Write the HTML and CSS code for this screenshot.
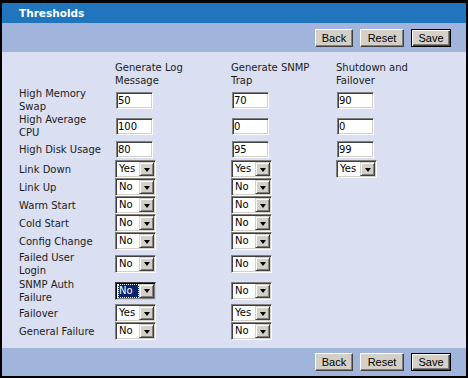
FILE: index.html
```html
<!DOCTYPE html>
<html>
<head>
<meta charset="utf-8">
<title>Thresholds</title>
<link rel="stylesheet" href="styles.css">
</head>
<body>
<div class="frame">
  <div class="titlebar">Thresholds</div>
  <div class="toolbar">
    <button class="btn-back">Back</button>
    <button class="btn-reset">Reset</button>
    <button class="btn-save">Save</button>
  </div>
  <div class="content">
    <div class="grid">
      <div></div>
      <div class="hd">Generate Log Message</div>
      <div class="hd">Generate SNMP Trap</div>
      <div class="hd">Shutdown and Failover</div>

      <div class="lbl">High Memory Swap</div>
      <div><input class="txt" value="50"></div>
      <div><input class="txt" value="70"></div>
      <div><input class="txt" value="90"></div>

      <div class="lbl">High Average CPU</div>
      <div><input class="txt" value="100"></div>
      <div><input class="txt" value="0"></div>
      <div><input class="txt" value="0"></div>

      <div class="lbl">High Disk Usage</div>
      <div><input class="txt" value="80"></div>
      <div><input class="txt" value="95"></div>
      <div><input class="txt" value="99"></div>

      <div class="lbl">Link Down</div>
      <div><span class="sel"><select><option selected>Yes</option><option>No</option></select><span class="arrow"></span></span></div>
      <div><span class="sel"><select><option selected>Yes</option><option>No</option></select><span class="arrow"></span></span></div>
      <div><span class="sel"><select><option selected>Yes</option><option>No</option></select><span class="arrow"></span></span></div>

      <div class="lbl">Link Up</div>
      <div><span class="sel"><select><option>Yes</option><option selected>No</option></select><span class="arrow"></span></span></div>
      <div><span class="sel"><select><option>Yes</option><option selected>No</option></select><span class="arrow"></span></span></div>
      <div></div>

      <div class="lbl">Warm Start</div>
      <div><span class="sel"><select><option>Yes</option><option selected>No</option></select><span class="arrow"></span></span></div>
      <div><span class="sel"><select><option>Yes</option><option selected>No</option></select><span class="arrow"></span></span></div>
      <div></div>

      <div class="lbl">Cold Start</div>
      <div><span class="sel"><select><option>Yes</option><option selected>No</option></select><span class="arrow"></span></span></div>
      <div><span class="sel"><select><option>Yes</option><option selected>No</option></select><span class="arrow"></span></span></div>
      <div></div>

      <div class="lbl">Config Change</div>
      <div><span class="sel"><select><option>Yes</option><option selected>No</option></select><span class="arrow"></span></span></div>
      <div><span class="sel"><select><option>Yes</option><option selected>No</option></select><span class="arrow"></span></span></div>
      <div></div>

      <div class="lbl tall">Failed User Login</div>
      <div><span class="sel"><select><option>Yes</option><option selected>No</option></select><span class="arrow"></span></span></div>
      <div><span class="sel"><select><option>Yes</option><option selected>No</option></select><span class="arrow"></span></span></div>
      <div></div>

      <div class="lbl tall">SNMP Auth Failure</div>
      <div><span class="sel focus"><select><option>Yes</option><option selected>No</option></select><span class="arrow"></span></span></div>
      <div><span class="sel"><select><option>Yes</option><option selected>No</option></select><span class="arrow"></span></span></div>
      <div></div>

      <div class="lbl">Failover</div>
      <div><span class="sel"><select><option selected>Yes</option><option>No</option></select><span class="arrow"></span></span></div>
      <div><span class="sel"><select><option selected>Yes</option><option>No</option></select><span class="arrow"></span></span></div>
      <div></div>

      <div class="lbl">General Failure</div>
      <div><span class="sel"><select><option>Yes</option><option selected>No</option></select><span class="arrow"></span></span></div>
      <div><span class="sel"><select><option>Yes</option><option selected>No</option></select><span class="arrow"></span></span></div>
      <div></div>
    </div>
  </div>
  <div class="toolbar bottom">
    <button class="btn-back">Back</button>
    <button class="btn-reset">Reset</button>
    <button class="btn-save">Save</button>
  </div>
</div>
</body>
</html>
```

FILE: styles.css
```css
* { box-sizing: border-box; }

html, body {
  margin: 0;
  padding: 0;
  background: #000;
}

.frame {
  width: 468px;
  height: 378px;
  border: 2px solid #000;
  border-top-width: 3px;
  display: flex;
  flex-direction: column;
  font-family: "DejaVu Sans", Verdana, sans-serif;
  font-size: 10px;
  color: #1c1c1c;
}

.titlebar {
  height: 20px;
  flex: 0 0 20px;
  background: #2075bc;
  color: #fff;
  font-weight: bold;
  font-size: 10.5px;
  line-height: 20px;
  padding-left: 17px;
}

.toolbar {
  height: 29px;
  flex: 0 0 29px;
  background: #a1b4dc;
  display: flex;
  align-items: center;
  justify-content: flex-end;
  gap: 7px;
  padding-right: 15px;
  padding-top: 1px;
}

.toolbar.bottom {
  height: 28px;
  flex: 0 0 28px;
  padding-top: 0;
  padding-bottom: 1px;
}

.toolbar button {
  font-family: "Liberation Sans", Arial, sans-serif;
  font-size: 11px;
  color: #000;
  height: 18px;
  padding: 0;
  margin: 0;
  background: #d4d0c8;
  border: 1px solid;
  border-color: #fff #404040 #404040 #fff;
  box-shadow: inset -1px -1px 0 #808080;
  line-height: 14px;
}

.btn-back { width: 38px; }
.btn-reset { width: 44px; }
.toolbar .btn-save {
  width: 40px;
  border-color: #000;
  box-shadow: inset 1px 1px 0 #fff, inset -1px -1px 0 #404040, inset -2px -2px 0 #808080;
}

.content {
  flex: 1;
  background: #dadff1;
  padding: 9px 0 0 17px;
}

.grid {
  display: grid;
  grid-template-columns: 96px 116px 105px 1fr;
  align-items: center;
  line-height: 13px;
}

.hd {
  max-width: 100px;
  align-self: start;
}

.lbl {
  padding-right: 14px;
}

.lbl.tall {
  padding: 0.5px 14px 0.5px 0;
}

.txt {
  display: block;
  width: 37px;
  height: 17px;
  margin: 2px 0 2px 1px;
  padding: 0 1px;
  font-family: "DejaVu Sans", Verdana, sans-serif;
  font-size: 10px;
  color: #000;
  background: #fff;
  border: 1px solid;
  border-color: #808080 #fff #fff #808080;
  box-shadow: inset 1px 1px 0 #404040, inset -1px -1px 0 #d4d0c8;
  outline: none;
}

.sel {
  display: flex;
  width: 41px;
  height: 18px;
  background: #fff;
  border: 1px solid;
  border-color: #808080 #fff #fff #808080;
  padding: 1px;
  box-shadow: inset 1px 1px 0 #404040, inset -1px -1px 0 #d4d0c8;
}

.sel select {
  appearance: none;
  -webkit-appearance: none;
  flex: 1;
  min-width: 0;
  height: 14px;
  margin: 0 0 0 1px;
  padding: 0 0 0 1px;
  border: 0;
  background: #fff;
  color: #000;
  font-family: "DejaVu Sans", Verdana, sans-serif;
  font-size: 10px;
  line-height: 14px;
  outline: none;
}

.sel .arrow {
  flex: 0 0 15px;
  height: 14px;
  background: #d4d0c8;
  border: 1px solid;
  border-color: #d4d0c8 #404040 #404040 #d4d0c8;
  box-shadow: inset 1px 1px 0 #fff, inset -1px -1px 0 #808080;
  display: flex;
  align-items: center;
  justify-content: center;
}

.sel .arrow::after {
  content: "";
  width: 0;
  height: 0;
  border-left: 3.5px solid transparent;
  border-right: 3.5px solid transparent;
  border-top: 4px solid #000;
  margin-top: 1px;
}

.sel.focus {
  border-color: #404040 #d4d0c8 #d4d0c8 #404040;
  box-shadow: inset 1px 1px 0 #000, inset -1px -1px 0 #808080;
}

.sel.focus select {
  background: #0a246a;
  color: #fff;
  outline: 1px dotted #fff;
  outline-offset: -1px;
}
```
